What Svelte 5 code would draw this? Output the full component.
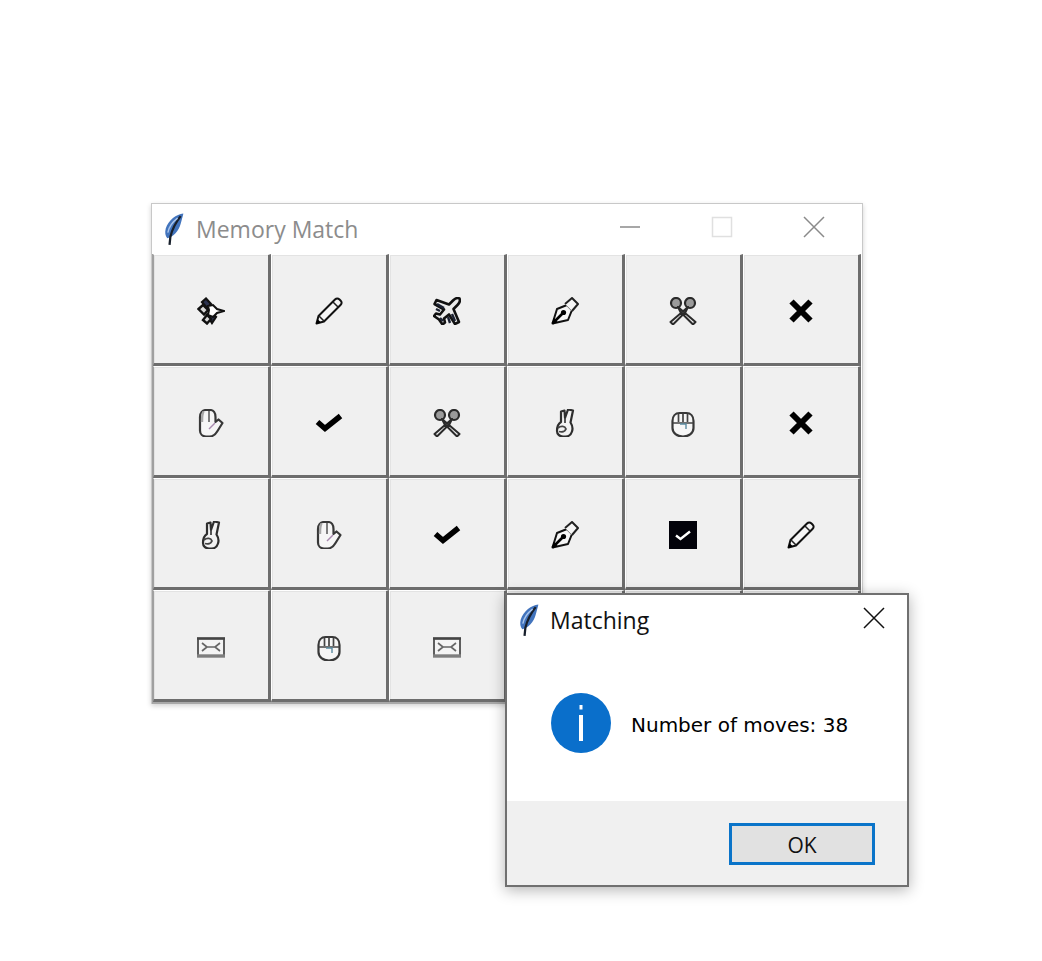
<script>
  // board as it stands when the game ends; row 4 runs on underneath the dialog
  const cells = [
    'satellite', 'pencil', 'plane', 'pen', 'scissors', 'cross',
    'hand', 'check', 'scissors', 'victory', 'fist', 'cross',
    'victory', 'hand', 'check', 'pen', 'checkbox', 'pencil',
    'envelope', 'fist', 'envelope', '', '', '',
  ];
</script>

{#snippet feather()}
  <svg class="feather" viewBox="0 0 20 32" aria-hidden="true">
    <path d="M18.500 .5C12 1 4 7 1.500 15c-1 4-.5 7 1.500 9.500 6-1 11-7 13-14 1-4 2-7 2.500-9.500z" fill="#4274bd" />
    <path d="M16 3C12 8 8 15 6 23l-.8 8" fill="none" stroke="#18202c" stroke-width="2.200" />
    <path d="M13 5C9 8 5 12 3.500 19" fill="none" stroke="#a9c4ea" stroke-width="1.400" />
  </svg>
{/snippet}

{#snippet icon(name)}
  <svg class="icon" viewBox="0 0 28 28" aria-hidden="true">
    {#if name === 'satellite'}
      <path d="M5 5l4-3.500 5 5.500-4 4zM10 18l4-3 5 5-4 6z" fill="#2c3350" stroke="#111" stroke-width="2.200" />
      <path d="M1.500 12l4.500-4 5 5-4 4.500zM6 23l4-5 4 4-4 4.500z" fill="#d8d8d8" stroke="#111" stroke-width="2.400" />
      <path d="M11 9l5-1 4 4 7 2-7 2-4 4-5-2 1-5z" fill="#fff" stroke="#111" stroke-width="2" />
    {:else if name === 'pencil'}
      <path d="M1.500 26.500l2-7.500L20 2.500c1.500-1.500 3-1.500 4.500 0l1 1c1.500 1.500 1.500 3 0 4.500L9 24.500z" fill="#f6f6f6" stroke="#111" stroke-width="2" stroke-linejoin="round" />
      <path d="M18 5l5 5M4 19l5 5" fill="none" stroke="#222" stroke-width="1.500" />
      <path d="M1 27l1.500-5 3.500 3.500z" fill="#000" />
    {:else if name === 'plane'}
      <path d="M26.500 1.500c-2-1-4.500 0-6.500 2l-4 4L3.500 3 1.500 7 11 12.500l-4 5-4-1-2 2.500 5 3.500 3.500 5 2.500-2-1-4 5-4L22 27l4-2-5.500-13 4-4c2-2 3-4.500 2-6.500z" fill="#ececec" stroke="#111" stroke-width="2.600" stroke-linejoin="round" />
      <path d="M4 7l7 4M3 12l4 2M7 21l3 3M19 17l3 7M15 20l2 6" fill="none" stroke="#1c2233" stroke-width="2.400" />
    {:else if name === 'pen'}
      <path d="M1.500 26.500L6 12l10-4 5 5-4 10z" fill="#f6f6f6" stroke="#111" stroke-width="2" stroke-linejoin="round" />
      <path d="M14 7l7-6 6 6-6 7" fill="#f6f6f6" stroke="#222" stroke-width="2" stroke-linejoin="round" />
      <path d="M1.500 26.500l10-10" fill="none" stroke="#000" stroke-width="2.600" />
      <circle cx="12.500" cy="15.500" r="2.600" fill="#000" />
      <path d="M1 27l1.500-6 4.500 4.500z" fill="#000" />
    {:else if name === 'scissors'}
      <circle cx="7" cy="6" r="5" fill="#9a9a9a" stroke="#2a2a2a" stroke-width="2.200" />
      <circle cx="21" cy="6" r="5" fill="#9a9a9a" stroke="#2a2a2a" stroke-width="2.200" />
      <path d="M9 10L26.500 25 24 27.500 11.500 15zM19 10L1.500 25 4 27.500 16.500 15z" fill="#ececec" stroke="#2a2a2a" stroke-width="2" stroke-linejoin="round" />
    {:else if name === 'cross'}
      <path d="M4.500 4.500l19 19M23.500 4.500l-19 19" fill="none" stroke="#000" stroke-width="6" />
    {:else if name === 'check'}
      <path d="M2.500 13l7.500 6.500L25.500 7" fill="none" stroke="#000" stroke-width="5.500" />
    {:else if name === 'checkbox'}
      <rect width="28" height="28" fill="#02020a" />
      <path d="M7 14.500l4.500 3.500L21 10.500" fill="none" stroke="#fff" stroke-width="2.400" />
    {:else if name === 'hand'}
      <path d="M3 8c0-4 2.500-7 6-7h4c3.500 0 5.500 3 5.500 7v5l3-2.500 4 3.500-5 8c-2 3.500-4.500 5.500-8 5.500H9c-3.500 0-6-2.500-6-6z" fill="#f6f6f6" stroke="#383838" stroke-width="2.200" stroke-linejoin="round" />
      <path d="M6.500 2.500C5 5 5 9 5 13" fill="none" stroke="#a8a8a8" stroke-width="2.400" />
      <path d="M12 2v11" fill="none" stroke="#555" stroke-width="1.500" />
      <path d="M18 14l-6 6" fill="none" stroke="#a98ab0" stroke-width="1.500" />
    {:else if name === 'victory'}
      <path d="M10 13V2.500l3.500-1L14 9l3-8.500 5 1-2.500 12c2 3 2.500 6 1.500 9-1 3.500-3.500 5-6.500 5H12c-3.500 0-6-2.500-6-5.500 0-4 1.500-7.500 4-9z" fill="#f2f2f2" stroke="#2e2e2e" stroke-width="2.200" stroke-linejoin="round" />
      <path d="M14 9v5M7 19c3-2.500 7-2 8 1-1 2.500-4 3.500-7 2.500" fill="none" stroke="#444" stroke-width="1.800" />
    {:else if name === 'fist'}
      <path d="M3.500 12c0-5 3-8 7-8h7c4 0 7 3 7 8v7c0 5-4.500 8.500-10.500 8.500S3.500 24 3.500 19z" fill="#f6f6f6" stroke="#383838" stroke-width="2.200" />
      <path d="M9.500 5v8M14 4.500V13M18.500 5v8M4 14h20" fill="none" stroke="#444" stroke-width="1.700" />
      <path d="M11 15h6v5" fill="none" stroke="#5a8aa0" stroke-width="1.400" />
    {:else if name === 'envelope'}
      <rect x="1" y="5.500" width="26" height="17.500" fill="#f4f4f4" stroke="#5e5e5e" stroke-width="2" />
      <path d="M0 5.500h28" stroke="#444" stroke-width="2.400" />
      <path d="M0 23h28" stroke="#7e7e7e" stroke-width="3.400" />
      <path d="M5 10l5 4-5 4M23 10l-5 4 5 4M10 14h8" fill="none" stroke="#666" stroke-width="1.700" />
    {/if}
  </svg>
{/snippet}

<div class="desktop">
  <section class="window">
    <header class="titlebar">
      {@render feather()}
      <span class="title">Memory Match</span>
      <div class="controls">
        <svg class="ctl" viewBox="0 0 22 22" aria-hidden="true"><path d="M1 11h20" stroke="#8a8a8a" stroke-width="1.500" /></svg>
        <svg class="ctl" viewBox="0 0 22 22" aria-hidden="true"><rect x="1.500" y="1.500" width="19" height="19" fill="none" stroke="#e0e0e0" stroke-width="1.500" /></svg>
        <svg class="ctl" viewBox="0 0 22 22" aria-hidden="true"><path d="M1 1l20 20M21 1L1 21" stroke="#8a8a8a" stroke-width="1.500" /></svg>
      </div>
    </header>
    <div class="board">
      {#each cells as c}
        <button type="button" class="cell">
          {#if c}{@render icon(c)}{/if}
        </button>
      {/each}
    </div>
  </section>

  <section class="dialog">
    <header class="dlg-title">
      {@render feather()}
      <span class="title">Matching</span>
      <svg class="dlg-close" viewBox="0 0 22 22" aria-hidden="true"><path d="M1 1l20 20M21 1L1 21" stroke="#111" stroke-width="1.500" /></svg>
    </header>
    <div class="dlg-body">
      <svg class="info" viewBox="0 0 60 60" aria-hidden="true">
        <circle cx="30" cy="30" r="30" fill="#0a6fcb" />
        <rect x="28.500" y="12" width="3" height="4.500" fill="#fff" />
        <rect x="28" y="22" width="4" height="26" fill="#fff" />
      </svg>
      <p class="msg">Number of moves: 38</p>
    </div>
    <footer class="dlg-foot">
      <button type="button" class="ok">OK</button>
    </footer>
  </section>
</div>

<style>
  :global(body) {
    background: #fff;
  }

  .desktop {
    position: relative;
    width: 1042px;
    height: 961px;
    overflow: hidden;
    background: #fff;
    font-family: "Open Sans", "Noto Sans", sans-serif;
  }

  .window {
    position: absolute;
    left: 151px;
    top: 203px;
    width: 712px;
    box-sizing: border-box;
    border: 1px solid #c8c8c8;
    border-bottom: none;
    background: #fff;
    box-shadow: 0 2px 5px rgba(0, 0, 0, 0.18);
  }

  .titlebar {
    display: flex;
    align-items: center;
    height: 50px;
    padding-left: 12px;
    gap: 11px;
  }

  .feather {
    width: 21px;
    height: 33px;
    flex: none;
  }

  .title {
    font-size: 23px;
    color: #8c8c8c;
    padding-bottom: 1px;
  }

  .controls {
    margin-left: auto;
    display: flex;
    align-items: center;
    gap: 70px;
    padding: 0 37px 4px 0;
  }

  .ctl {
    width: 22px;
    height: 22px;
    display: block;
  }

  .board {
    display: grid;
    grid-template-columns: repeat(6, 118px);
    grid-auto-rows: 112px;
    border-left: 1px solid #a0a0a0;
    border-bottom: 2px solid #a8a8a8;
    background: #fff;
  }

  .cell {
    box-sizing: border-box;
    display: flex;
    align-items: center;
    justify-content: center;
    appearance: none;
    margin: 0;
    padding: 4px 0 0;
    border-style: solid;
    border-width: 1px 3px 3px 1px;
    border-color: #fff #6d6d6d #6d6d6d #fff;
    border-radius: 0;
    background: #f0f0f0;
    box-shadow: inset 1px 1px 0 #e3e3e3;
  }

  .cell:nth-child(6n + 1) {
    border-left-color: #a0a0a0;
  }

  /* the reference glyphs are upscaled, so soften the edges a touch */
  .icon {
    width: 28px;
    height: 28px;
    display: block;
    filter: blur(0.35px);
  }

  .dialog {
    position: absolute;
    left: 505px;
    top: 593px;
    width: 404px;
    height: 294px;
    box-sizing: border-box;
    display: flex;
    flex-direction: column;
    border: 2px solid #707070;
    background: #fff;
    box-shadow: 0 3px 14px rgba(0, 0, 0, 0.3);
  }

  .dlg-title {
    display: flex;
    align-items: center;
    height: 50px;
    padding-left: 12px;
    gap: 10px;
  }

  .dlg-title .title {
    color: #111;
  }

  .dlg-close {
    width: 22px;
    height: 22px;
    margin-left: auto;
    margin-right: 22px;
    margin-bottom: 4px;
  }

  .dlg-body {
    flex: 1;
    display: flex;
    align-items: flex-start;
    gap: 20px;
    padding: 48px 0 0 44px;
  }

  .info {
    width: 60px;
    height: 60px;
    flex: none;
  }

  .msg {
    margin: 20px 0 0;
    font-family: "DejaVu Sans", sans-serif;
    font-size: 20px;
    color: #000;
  }

  .dlg-foot {
    height: 84px;
    display: flex;
    align-items: flex-start;
    justify-content: flex-end;
    padding: 22px 32px 0 0;
    box-sizing: border-box;
    background: #f0f0f0;
  }

  .ok {
    width: 146px;
    height: 42px;
    box-sizing: border-box;
    appearance: none;
    border: 3px solid #0a74c9;
    border-radius: 0;
    background: #e1e1e1;
    color: #111;
    font-family: "Open Sans", sans-serif;
    font-size: 21px;
    padding: 2px 0 0;
  }
</style>
